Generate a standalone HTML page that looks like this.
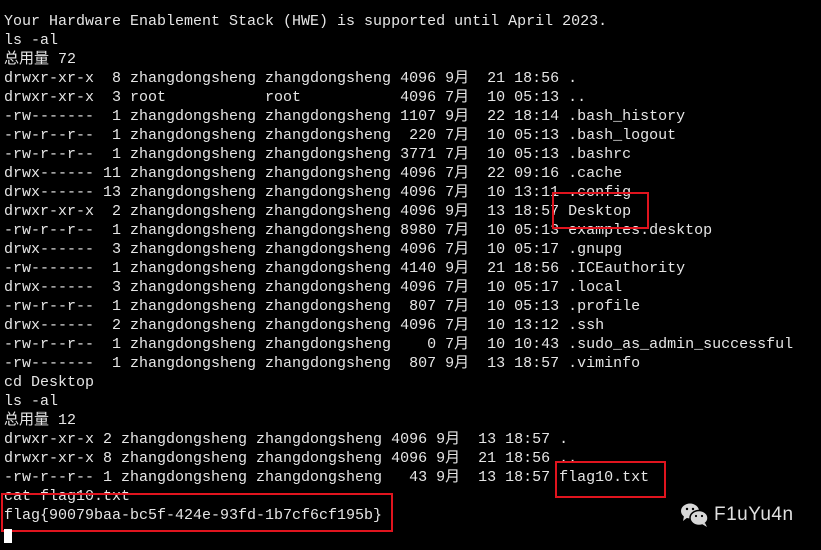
<!DOCTYPE html>
<html><head><meta charset="utf-8"><style>
html,body{margin:0;padding:0;background:#000;width:821px;height:550px;overflow:hidden;position:relative}
pre{position:absolute;left:4px;top:12px;margin:0;font-family:"Liberation Mono","Noto Sans CJK SC",monospace;font-size:15px;line-height:19px;color:#e6e6e6;white-space:pre}
.box{position:absolute;border:2px solid #e0141e}
.cur{position:absolute;left:4px;top:529px;width:8px;height:14px;background:#fff}
.logo{position:absolute;left:714px;top:504px;font-family:"Liberation Sans",sans-serif;font-size:19px;color:#e0e0e0;letter-spacing:0.5px}
</style></head><body>
<pre>Your Hardware Enablement Stack (HWE) is supported until April 2023.
ls -al
总用量 72
drwxr-xr-x  8 zhangdongsheng zhangdongsheng 4096 9月  21 18:56 .
drwxr-xr-x  3 root           root           4096 7月  10 05:13 ..
-rw-------  1 zhangdongsheng zhangdongsheng 1107 9月  22 18:14 .bash_history
-rw-r--r--  1 zhangdongsheng zhangdongsheng  220 7月  10 05:13 .bash_logout
-rw-r--r--  1 zhangdongsheng zhangdongsheng 3771 7月  10 05:13 .bashrc
drwx------ 11 zhangdongsheng zhangdongsheng 4096 7月  22 09:16 .cache
drwx------ 13 zhangdongsheng zhangdongsheng 4096 7月  10 13:11 .config
drwxr-xr-x  2 zhangdongsheng zhangdongsheng 4096 9月  13 18:57 Desktop
-rw-r--r--  1 zhangdongsheng zhangdongsheng 8980 7月  10 05:13 examples.desktop
drwx------  3 zhangdongsheng zhangdongsheng 4096 7月  10 05:17 .gnupg
-rw-------  1 zhangdongsheng zhangdongsheng 4140 9月  21 18:56 .ICEauthority
drwx------  3 zhangdongsheng zhangdongsheng 4096 7月  10 05:17 .local
-rw-r--r--  1 zhangdongsheng zhangdongsheng  807 7月  10 05:13 .profile
drwx------  2 zhangdongsheng zhangdongsheng 4096 7月  10 13:12 .ssh
-rw-r--r--  1 zhangdongsheng zhangdongsheng    0 7月  10 10:43 .sudo_as_admin_successful
-rw-------  1 zhangdongsheng zhangdongsheng  807 9月  13 18:57 .viminfo
cd Desktop
ls -al
总用量 12
drwxr-xr-x 2 zhangdongsheng zhangdongsheng 4096 9月  13 18:57 .
drwxr-xr-x 8 zhangdongsheng zhangdongsheng 4096 9月  21 18:56 ..
-rw-r--r-- 1 zhangdongsheng zhangdongsheng   43 9月  13 18:57 flag10.txt
cat flag10.txt
flag{90079baa-bc5f-424e-93fd-1b7cf6cf195b}</pre>
<div class="box" style="left:552px;top:192px;width:93px;height:33px"></div>
<div class="box" style="left:555px;top:461px;width:107px;height:33px"></div>
<div class="box" style="left:1px;top:493px;width:388px;height:35px"></div>
<div class="cur"></div>
<svg style="position:absolute;left:680px;top:502px" width="30" height="26" viewBox="0 0 30 26">
<ellipse cx="10" cy="9" rx="9" ry="7.5" fill="#d8d8d8"/>
<path d="M4 14 L3 19 L8 15 Z" fill="#d8d8d8"/>
<ellipse cx="19" cy="16" rx="9" ry="7.5" fill="#d8d8d8" stroke="#000" stroke-width="1.5"/>
<path d="M25 21 L27 25 L22 22 Z" fill="#d8d8d8"/>
<circle cx="7" cy="7" r="1.2" fill="#000"/><circle cx="13" cy="7" r="1.2" fill="#000"/>
<circle cx="16" cy="14" r="1.1" fill="#000"/><circle cx="22" cy="14" r="1.1" fill="#000"/>
</svg>
<div class="logo">F1uYu4n</div>
</body></html>
